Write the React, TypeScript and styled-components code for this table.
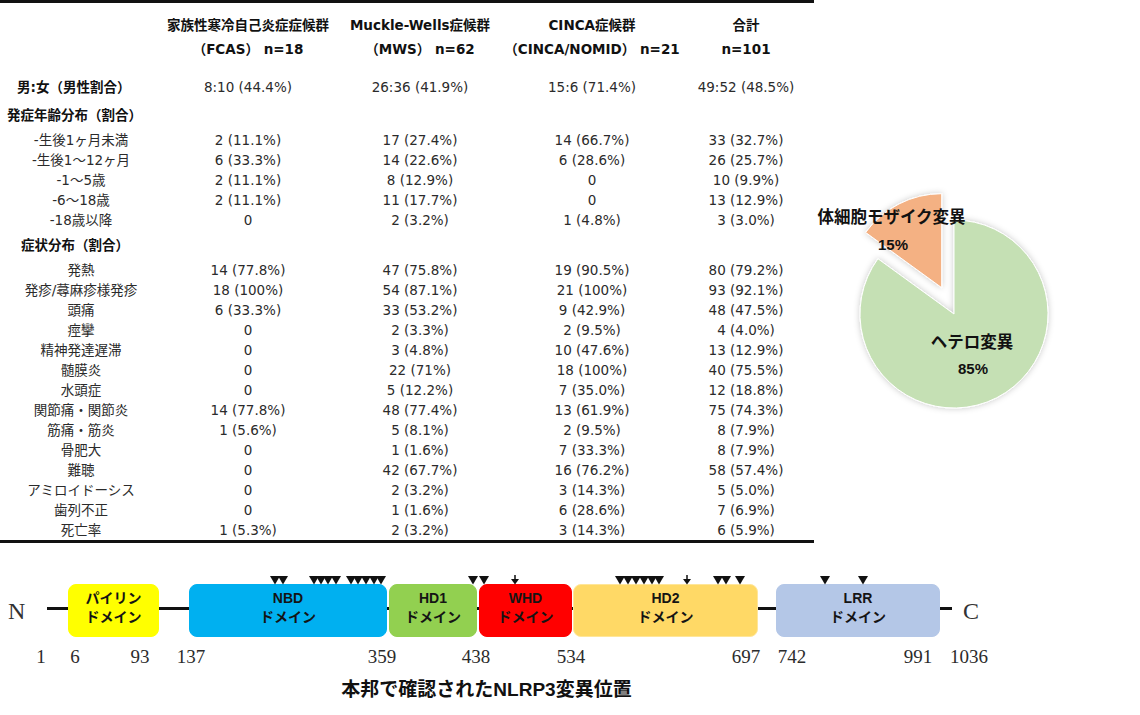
import React from "react";
import styled, { createGlobalStyle } from "styled-components";

const GlobalStyle = createGlobalStyle`
  html, body { margin: 0; padding: 0; background: #ffffff; }
  body {
    width: 1140px;
    height: 715px;
    overflow: hidden;
    font-family: "DejaVu Sans", "Noto Sans CJK JP", sans-serif;
  }
`;

const Page = styled.div`
  width: 1140px;
  height: 715px;
  display: flex;
  flex-direction: column;
`;

const Top = styled.div`
  display: flex;
  align-items: flex-start;
  height: 543px;
`;

const Table = styled.div`
  width: 814px;
  border-top: 3px solid #111;
  border-bottom: 3px solid #111;
  display: flex;
  flex-direction: column;
  font-family: "DejaVu Sans", "Noto Sans CJK JP", sans-serif;
  font-size: 13.5px;
  color: #2b2b2b;
`;

const cols = "162px 172px 172px 172px 136px";

const Header = styled.div`
  display: grid;
  grid-template-columns: ${cols};
  padding-top: 10px;
  font-weight: 700;
  color: #111;
  line-height: 24px;
`;

const HeadCell = styled.div`
  text-align: center;
  white-space: nowrap;
  display: flex;
  flex-direction: column;
  align-items: center;
`;

const Row = styled.div<{ $mt?: number }>`
  display: grid;
  grid-template-columns: ${cols};
  height: 20px;
  line-height: 20px;
  margin-top: ${(p) => p.$mt ?? 0}px;
  align-items: center;
`;

const Cell = styled.div`
  text-align: center;
  white-space: nowrap;
`;

const LeadLabel = styled.div`
  font-weight: 700;
  color: #111;
  padding-left: 17px;
  white-space: nowrap;
`;

const SectionHead = styled.div<{ $indent: number; $mt: number }>`
  height: 24px;
  line-height: 24px;
  margin-top: ${(p) => p.$mt}px;
  padding-left: ${(p) => p.$indent}px;
  font-weight: 700;
  color: #111;
  white-space: nowrap;
`;

const Group = styled.div<{ $mt: number }>`
  display: flex;
  flex-direction: column;
  margin-top: ${(p) => p.$mt}px;
`;

const PieBox = styled.svg`
  margin-top: 150px;
  width: 326px;
  height: 270px;
  flex: none;
  overflow: visible;
`;

const Diagram = styled.div`
  position: relative;
  height: 172px;
  padding-top: 41px;
  box-sizing: border-box;
  display: flex;
  flex-direction: column;
`;

const Backbone = styled.div`
  display: flex;
  align-items: center;
  height: 53px;
`;

const Terminal = styled.div<{ $w?: number; $pl?: number }>`
  width: ${(p) => (p.$w ? `${p.$w}px` : "auto")};
  padding-left: ${(p) => p.$pl ?? 0}px;
  box-sizing: border-box;
  font-family: "Liberation Serif", serif;
  font-size: 24px;
  line-height: 24px;
  color: #333;
`;

const Link = styled.div<{ $w: number }>`
  width: ${(p) => p.$w}px;
  height: 3px;
  background: #111;
  margin-bottom: 5px;
  flex: none;
`;

const Domain = styled.div<{ $w: number; $bg: string; $bd?: string }>`
  width: ${(p) => p.$w}px;
  height: 53px;
  flex: none;
  box-sizing: border-box;
  background: ${(p) => p.$bg};
  border: 1px solid ${(p) => p.$bd ?? p.$bg};
  border-radius: 8px;
  display: flex;
  flex-direction: column;
  align-items: center;
  justify-content: center;
  padding-bottom: 5px;
  font-family: "Liberation Sans", "Noto Sans CJK JP", sans-serif;
  font-weight: 700;
  font-size: 14px;
  line-height: 19px;
  color: #141414;
  white-space: nowrap;
`;

const Markers = styled.svg`
  position: absolute;
  top: 32px;
  left: 0;
  width: 1140px;
  height: 10px;
`;

const Numbers = styled.div`
  position: relative;
  height: 20px;
  margin-top: 10px;
`;

const Num = styled.span`
  position: absolute;
  top: 0;
  transform: translateX(-50%);
  font-family: "Liberation Serif", serif;
  font-size: 19px;
  line-height: 20px;
  color: #2b2b2b;
`;

const Caption = styled.div`
  width: 973px;
  margin-top: 11px;
  text-align: center;
  font-family: "Liberation Sans", "Noto Sans CJK JP", sans-serif;
  font-weight: 700;
  font-size: 19px;
  line-height: 24px;
  color: #111;
`;

const ageRows: [string, string[]][] = [
  ["-生後1ヶ月未満", ["2 (11.1%)", "17 (27.4%)", "14 (66.7%)", "33 (32.7%)"]],
  ["-生後1～12ヶ月", ["6 (33.3%)", "14 (22.6%)", "6 (28.6%)", "26 (25.7%)"]],
  ["-1～5歳", ["2 (11.1%)", "8 (12.9%)", "0", "10 (9.9%)"]],
  ["-6～18歳", ["2 (11.1%)", "11 (17.7%)", "0", "13 (12.9%)"]],
  ["-18歳以降", ["0", "2 (3.2%)", "1 (4.8%)", "3 (3.0%)"]],
];

const symptomRows: [string, string[]][] = [
  ["発熱", ["14 (77.8%)", "47 (75.8%)", "19 (90.5%)", "80 (79.2%)"]],
  ["発疹/蕁麻疹様発疹", ["18 (100%)", "54 (87.1%)", "21 (100%)", "93 (92.1%)"]],
  ["頭痛", ["6 (33.3%)", "33 (53.2%)", "9 (42.9%)", "48 (47.5%)"]],
  ["痙攣", ["0", "2 (3.3%)", "2 (9.5%)", "4 (4.0%)"]],
  ["精神発達遅滞", ["0", "3 (4.8%)", "10 (47.6%)", "13 (12.9%)"]],
  ["髄膜炎", ["0", "22 (71%)", "18 (100%)", "40 (75.5%)"]],
  ["水頭症", ["0", "5 (12.2%)", "7 (35.0%)", "12 (18.8%)"]],
  ["関節痛・関節炎", ["14 (77.8%)", "48 (77.4%)", "13 (61.9%)", "75 (74.3%)"]],
  ["筋痛・筋炎", ["1 (5.6%)", "5 (8.1%)", "2 (9.5%)", "8 (7.9%)"]],
  ["骨肥大", ["0", "1 (1.6%)", "7 (33.3%)", "8 (7.9%)"]],
  ["難聴", ["0", "42 (67.7%)", "16 (76.2%)", "58 (57.4%)"]],
  ["アミロイドーシス", ["0", "2 (3.2%)", "3 (14.3%)", "5 (5.0%)"]],
  ["歯列不正", ["0", "1 (1.6%)", "6 (28.6%)", "7 (6.9%)"]],
  ["死亡率", ["1 (5.3%)", "2 (3.2%)", "3 (14.3%)", "6 (5.9%)"]],
];

const DataRow: React.FC<{ label: string; values: string[] }> = ({ label, values }) => (
  <Row>
    <Cell>{label}</Cell>
    {values.map((v, i) => (
      <Cell key={i}>{v}</Cell>
    ))}
  </Row>
);

const PieChart: React.FC = () => {
  const r = 94;
  const cx = 140;
  const cy = 164;
  const a = (54 * Math.PI) / 180;
  const gx = cx - r * Math.sin(a);
  const gy = cy - r * Math.cos(a);
  const ox = cx - 12.3;
  const oy = cy - 26.3;
  const oex = ox - r * Math.sin(a);
  const oey = oy - r * Math.cos(a);
  return (
    <PieBox viewBox="0 0 326 270">
      <defs>
        <filter id="sh" x="-20%" y="-20%" width="140%" height="140%">
          <feDropShadow dx="0" dy="0" stdDeviation="3" floodColor="#000" floodOpacity="0.22" />
        </filter>
      </defs>
      <g filter="url(#sh)">
        <path
          d={`M${cx},${cy} L${cx},${cy - r} A${r},${r} 0 1 1 ${gx},${gy} Z`}
          fill="#C5E0B4"
          stroke="#ffffff"
          strokeWidth="1"
        />
        <path
          d={`M${ox},${oy} L${oex},${oey} A${r},${r} 0 0 1 ${ox},${oy - r} Z`}
          fill="#F4B183"
          stroke="#ffffff"
          strokeWidth="1"
        />
      </g>
      <g fontFamily='"Liberation Sans", "Noto Sans CJK JP", sans-serif' fontWeight="700" fill="#111" textAnchor="middle" dominantBaseline="central">
        <text x="77.5" y="67" fontSize="16.5">体細胞モザイク変異</text>
        <text x="79" y="94" fontSize="15">15%</text>
        <text x="158" y="192" fontSize="16.5">ヘテロ変異</text>
        <text x="159" y="218" fontSize="15">85%</text>
      </g>
    </PieBox>
  );
};

const triangles = [
  275, 283, 314, 321, 328, 336, 351, 358, 366, 374, 381, 473, 484, 620, 628, 636, 644, 652, 659, 718, 726, 740, 825, 863,
];
const stems = [515, 687];

const MarkerLayer: React.FC = () => (
  <Markers viewBox="0 0 1140 10">
    {triangles.map((x, i) => (
      <polygon key={i} points={`${x - 5},1 ${x + 5},1 ${x},9.5`} fill="#111" />
    ))}
    {stems.map((x, i) => (
      <g key={`s${i}`} fill="#111">
        <rect x={x - 0.75} y={0} width={1.5} height={5} />
        <polygon points={`${x - 4},4 ${x + 4},4 ${x},9.5`} />
      </g>
    ))}
  </Markers>
);

const positions: [string, number][] = [
  ["1", 41],
  ["6", 75],
  ["93", 140],
  ["137", 191],
  ["359", 382],
  ["438", 476],
  ["534", 571],
  ["697", 746],
  ["742", 792],
  ["991", 918],
  ["1036", 969],
];

export default function App() {
  return (
    <Page>
      <GlobalStyle />
      <Top>
        <Table>
          <Header>
            <HeadCell />
            <HeadCell>
              <span>家族性寒冷自己炎症症候群</span>
              <span>（FCAS） n=18</span>
            </HeadCell>
            <HeadCell>
              <span>Muckle-Wells症候群</span>
              <span>（MWS） n=62</span>
            </HeadCell>
            <HeadCell>
              <span>CINCA症候群</span>
              <span>（CINCA/NOMID） n=21</span>
            </HeadCell>
            <HeadCell>
              <span>合計</span>
              <span>n=101</span>
            </HeadCell>
          </Header>
          <Row $mt={16}>
            <LeadLabel>男:女（男性割合）</LeadLabel>
            <Cell>8:10 (44.4%)</Cell>
            <Cell>26:36 (41.9%)</Cell>
            <Cell>15:6 (71.4%)</Cell>
            <Cell>49:52 (48.5%)</Cell>
          </Row>
          <SectionHead $indent={7} $mt={6}>発症年齢分布（割合）</SectionHead>
          <Group $mt={3}>
            {ageRows.map(([l, v]) => (
              <DataRow key={l} label={l} values={v} />
            ))}
          </Group>
          <SectionHead $indent={21} $mt={3}>症状分布（割合）</SectionHead>
          <Group $mt={3}>
            {symptomRows.map(([l, v]) => (
              <DataRow key={l} label={l} values={v} />
            ))}
          </Group>
        </Table>
        <PieChart />
      </Top>
      <Diagram>
        <MarkerLayer />
        <Backbone>
          <Terminal $w={47} $pl={8}>N</Terminal>
          <Link $w={21} />
          <Domain $w={91} $bg="#FFFF00">
            <span>パイリン</span>
            <span>ドメイン</span>
          </Domain>
          <Link $w={30} />
          <Domain $w={198} $bg="#00B0F0">
            <span>NBD</span>
            <span>ドメイン</span>
          </Domain>
          <Link $w={2} />
          <Domain $w={88} $bg="#92D050">
            <span>HD1</span>
            <span>ドメイン</span>
          </Domain>
          <Link $w={2} />
          <Domain $w={93} $bg="#FF0000">
            <span>WHD</span>
            <span>ドメイン</span>
          </Domain>
          <Link $w={1} />
          <Domain $w={185} $bg="#FFD966" $bd="#FFE699">
            <span>HD2</span>
            <span>ドメイン</span>
          </Domain>
          <Link $w={18} />
          <Domain $w={164} $bg="#B4C7E7">
            <span>LRR</span>
            <span>ドメイン</span>
          </Domain>
          <Link $w={12} />
          <Terminal $pl={11}>C</Terminal>
        </Backbone>
        <Numbers>
          {positions.map(([t, x]) => (
            <Num key={t} style={{ left: x }}>
              {t}
            </Num>
          ))}
        </Numbers>
        <Caption>本邦で確認されたNLRP3変異位置</Caption>
      </Diagram>
    </Page>
  );
}
